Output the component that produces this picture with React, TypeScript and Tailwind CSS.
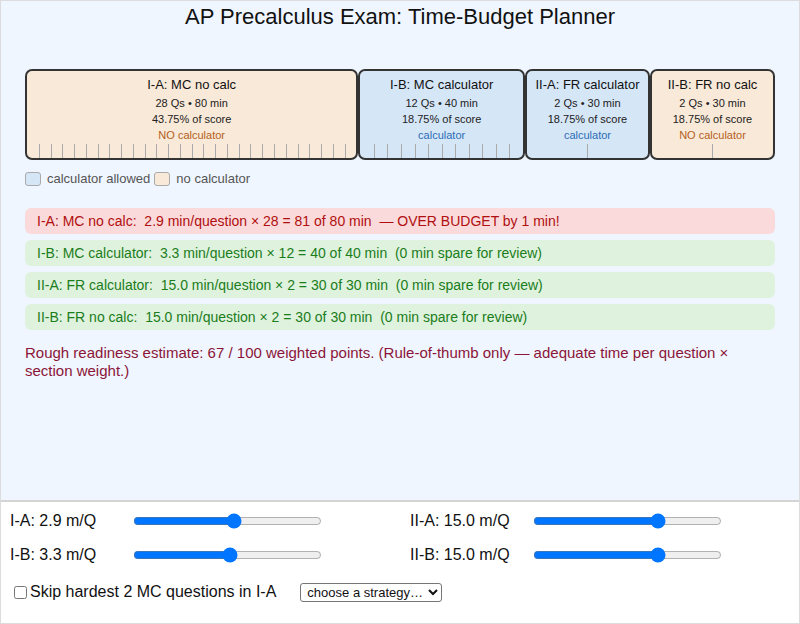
import React from 'react'

type Section = {
  id: string
  name: string
  qs: number
  min: number
  weight: string
  calc: boolean
}

const sections: Section[] = [
  { id: 'I-A', name: 'MC no calc', qs: 28, min: 80, weight: '43.75', calc: false },
  { id: 'I-B', name: 'MC calculator', qs: 12, min: 40, weight: '18.75', calc: true },
  { id: 'II-A', name: 'FR calculator', qs: 2, min: 30, weight: '18.75', calc: true },
  { id: 'II-B', name: 'FR no calc', qs: 2, min: 30, weight: '18.75', calc: false },
]

const rows = [
  { text: 'I-A: MC no calc:  2.9 min/question × 28 = 81 of 80 min  — OVER BUDGET by 1 min!', over: true },
  { text: 'I-B: MC calculator:  3.3 min/question × 12 = 40 of 40 min  (0 min spare for review)', over: false },
  { text: 'II-A: FR calculator:  15.0 min/question × 2 = 30 of 30 min  (0 min spare for review)', over: false },
  { text: 'II-B: FR no calc:  15.0 min/question × 2 = 30 of 30 min  (0 min spare for review)', over: false },
]

const sliders = [
  { label: 'I-A: 2.9 m/Q', value: 535 },
  { label: 'II-A: 15.0 m/Q', value: 674 },
  { label: 'I-B: 3.3 m/Q', value: 512 },
  { label: 'II-B: 15.0 m/Q', value: 674 },
]

function SectionBox({ s }: { s: Section }) {
  const ticks = Array.from({ length: s.qs - 1 }, (_, i) => ((i + 1) / s.qs) * 100)
  return (
    <div
      className={`relative border-2 border-[#333] rounded-[7px] text-center text-[#222] ${
        s.calc ? 'bg-[#d5e6f7]' : 'bg-[#f9e9d8]'
      }`}
    >
      <div className="mt-[6px] text-[13px] leading-4 text-[#111]">
        {s.id}: {s.name}
      </div>
      <div className="mt-[2px] text-[11px] leading-4">
        {s.qs} Qs • {s.min} min
      </div>
      <div className="text-[11px] leading-4">{s.weight}% of score</div>
      <div className={`text-[11px] leading-4 ${s.calc ? 'text-[#2a6db5]' : 'text-[#b3601c]'}`}>
        {s.calc ? 'calculator' : 'NO calculator'}
      </div>
      {/* one tick per question boundary */}
      {ticks.map((p) => (
        <span key={p} className="absolute bottom-0 h-[14px] w-px bg-[#aaa]" style={{ left: `${p}%` }} />
      ))}
    </div>
  )
}

export default function App() {
  return (
    <div className="w-[800px] h-[624px] border border-[#dcdcdc] flex flex-col font-['Liberation_Sans',Arial,sans-serif] text-[#111]">
      <div className="flex-1 bg-[#eff6ff] px-6">
        <h1 className="pt-[4px] text-[22px] leading-6 text-center">AP Precalculus Exam: Time-Budget Planner</h1>

        <div className="mt-[40px] grid grid-cols-[80fr_40fr_30fr_30fr] h-[91px]">
          {sections.map((s) => (
            <SectionBox key={s.id} s={s} />
          ))}
        </div>

        <div className="mt-[11px] flex items-center text-[13px] leading-4 text-[#555]">
          <span className="w-[16px] h-[14px] rounded-[3px] border border-[#aaa] bg-[#d5e6f7]" />
          <span className="ml-[6px]">calculator allowed</span>
          <span className="ml-[4px] w-[16px] h-[14px] rounded-[3px] border border-[#aaa] bg-[#f9e9d8]" />
          <span className="ml-[6px]">no calculator</span>
        </div>

        <div className="mt-[21px] flex flex-col gap-[6px]">
          {rows.map((r) => (
            <div
              key={r.text}
              className={`h-[26px] rounded-[6px] px-[12px] text-[14px] leading-[26px] whitespace-pre ${
                r.over ? 'bg-[#fbdadb] text-[#b00f0f]' : 'bg-[#dff2de] text-[#1b7d1b]'
              }`}
            >
              {r.text}
            </div>
          ))}
        </div>

        <p className="mt-[14px] text-[15px] leading-[18px] text-[#8b1538]">
          Rough readiness estimate: 67 / 100 weighted points. (Rule-of-thumb only — adequate time per question × section weight.)
        </p>
      </div>

      <div className="h-[123px] border-t-2 border-[#d4d4d4] bg-white px-[9px] pt-[6px]">
        <div className="grid grid-cols-[400px_1fr] gap-y-[8px]">
          {sliders.map((sl) => (
            <div key={sl.label} className="flex items-center h-[26px]">
              <span className="w-[123px] text-[16px]">{sl.label}</span>
              <input type="range" min={0} max={1000} defaultValue={sl.value} className="w-[189px] m-0" />
            </div>
          ))}
        </div>
        <div className="mt-[11px] flex items-center h-[26px]">
          <label className="flex items-center text-[16px]">
            <input type="checkbox" className="ml-[4px] mr-[3px]" />
            Skip hardest 2 MC questions in I-A
          </label>
          <select className="ml-[24px] text-[13px] border border-[#767676] rounded-[3px] px-[2px] bg-white" defaultValue="">
            <option value="">choose a strategy…</option>
            <option value="even">even pacing</option>
            <option value="front">front-load MC</option>
          </select>
        </div>
      </div>
    </div>
  )
}
